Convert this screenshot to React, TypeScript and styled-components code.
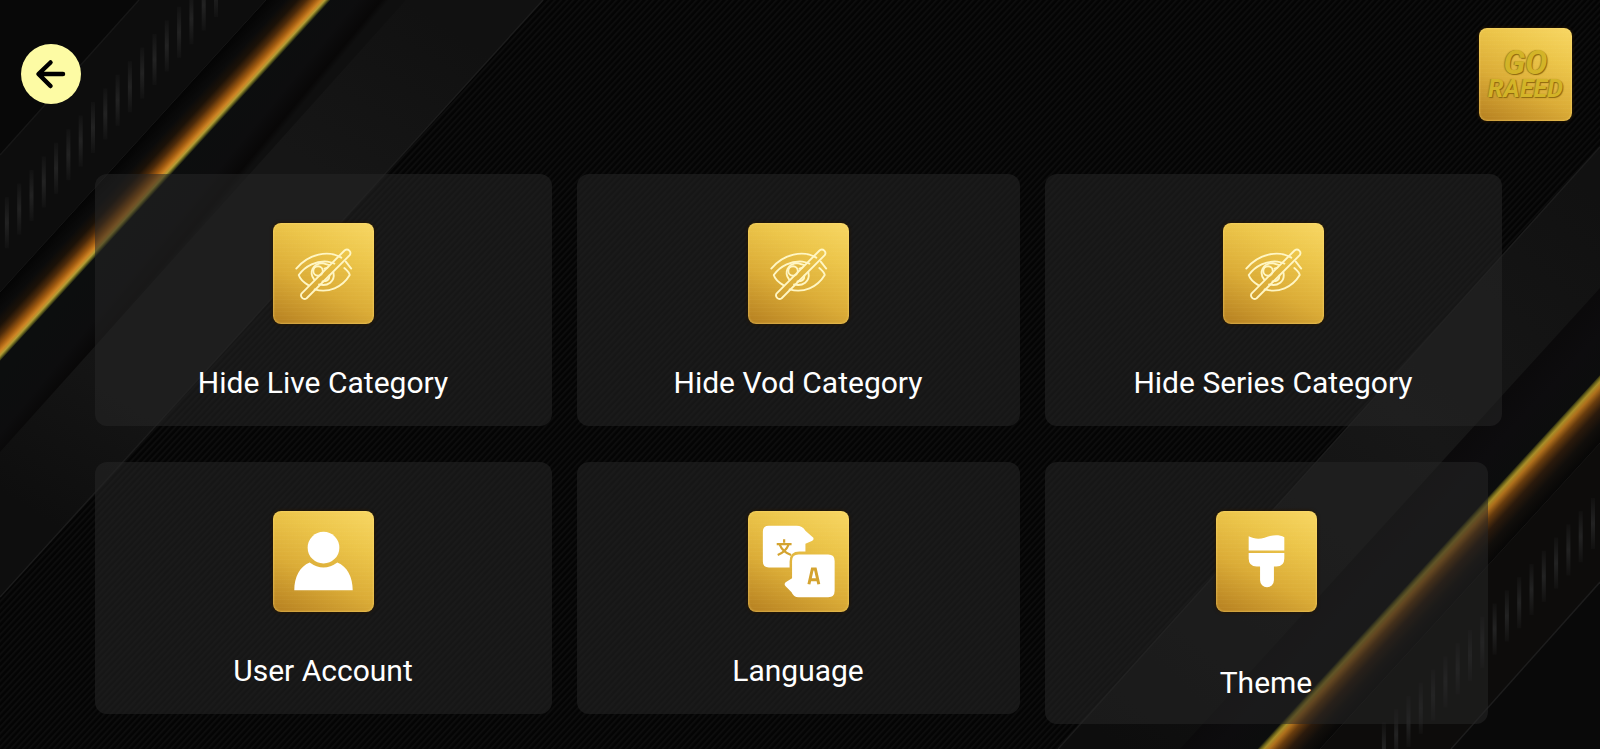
import React from "react";
import styled, { createGlobalStyle } from "styled-components";

const GlobalStyle = createGlobalStyle`
  * { box-sizing: border-box; }
  body { margin: 0; background: #050505; color: #fff; font-family: Roboto, "Liberation Sans", sans-serif; }
`;

const Page = styled.div`
  position: relative;
  isolation: isolate;
  min-height: 100vh;
  overflow: hidden;
`;

const Backdrop = styled.svg`
  position: absolute;
  inset: 0;
  z-index: -1;
  width: 100%;
  height: 100%;
`;

const TopBar = styled.header`
  display: flex;
  justify-content: space-between;
  align-items: flex-start;
  padding: 28px 28px 0 21px;
`;

const BackButton = styled.button`
  display: grid;
  place-items: center;
  width: 60px;
  height: 60px;
  margin-top: 16px;
  padding: 0;
  border: 0;
  border-radius: 50%;
  background: #fdfba4;
  color: #000;
  cursor: pointer;
`;

const GoldPlate = styled.span<{ $size: number }>`
  display: grid;
  place-items: center;
  flex: none;
  width: ${(p) => p.$size}px;
  height: ${(p) => p.$size}px;
  border-radius: 8px;
  background:
    repeating-linear-gradient(180deg, rgba(255, 240, 160, 0.03) 0 1px, transparent 1px 4px),
    linear-gradient(205deg, #f8d764 0%, #ecc54a 30%, #dbac37 62%, #b57f20 100%);
  box-shadow:
    inset 0 0 2px 1px rgba(255, 222, 120, 0.4),
    0 0 3px 1px rgba(40, 24, 0, 0.8);
`;

const Brand = styled(GoldPlate)`
  align-content: center;
  color: #d3b428;
  font-style: italic;
  font-weight: 700;
  text-align: center;
  text-shadow: 1px 1px 1px #8c680e, -1px 0 1px #a8841a;
`;

const BrandTop = styled.span`
  font-size: 33px;
  line-height: 28px;
`;

const BrandBottom = styled.span`
  font-size: 25px;
  line-height: 24px;
`;

const Tiles = styled.main`
  display: grid;
  grid-template-columns: 457fr 443fr 457fr;
  gap: 36px 25px;
  align-items: start;
  padding: 53px 98px 24px 95px;
`;

const Tile = styled.button<{ $inset?: boolean }>`
  display: flex;
  flex-direction: column;
  align-items: center;
  gap: ${(p) => (p.$inset ? 52 : 40)}px;
  min-width: 0;
  margin: 0 ${(p) => (p.$inset ? 14 : 0)}px 0 0;
  padding: 49px 17px ${(p) => (p.$inset ? 23 : 25)}px 16px;
  border: 0;
  border-radius: 12px;
  background: rgba(38, 38, 38, 0.55);
  color: #fff;
  font: 400 30px/37px Roboto, "Liberation Sans", sans-serif;
  cursor: pointer;
`;

const ArrowIcon = () => (
  <svg width="60" height="60" viewBox="0 0 60 60" fill="none" stroke="currentColor" strokeWidth="4.500" strokeLinecap="round" strokeLinejoin="round" aria-hidden="true">
    <path d="M42 30H18M29.500 18.500L17.500 30L29.500 42" />
  </svg>
);

const HiddenIcon = () => (
  <svg width="101" height="101" viewBox="0 0 102 102" fill="none" stroke="#fff6c4" strokeWidth="1.900" strokeLinecap="round" strokeLinejoin="round" aria-hidden="true">
    <path d="M23.500 46C36 31 56 27 69 35M73.500 39L79 46" />
    <path d="M36 63C31 60 27 56 26 52.500C33 43 44 38 55 39C58 39.500 60 40 62 41M72 45.500C75 48 77 50 77.500 52.500C70 65 56 71 42 67" />
    <path d="M41.500 57C36 50 40 41 50 40.500L57 42.500M61 50C63 59 55 64.500 46.500 62" />
    <path d="M52 46L55 45M57 53C57 57 54 59 50 59" />
    <circle cx="45.500" cy="48.500" r="4.800" />
    <path d="M29 71L72.500 27.500A3.600 3.600 0 0 1 77.500 32.500L34 76A3.600 3.600 0 0 1 29 71Z" />
  </svg>
);

const UserIcon = () => (
  <svg width="101" height="101" viewBox="0 0 102 102" fill="#fff" aria-hidden="true">
    <circle cx="51" cy="37" r="16" />
    <path d="M37 52Q51 62 65 52C75 56 80.500 67 80.500 80H21.500C21.500 67 27 56 37 52Z" />
  </svg>
);

const LanguageIcon = () => (
  <svg width="101" height="101" viewBox="0 0 102 102" aria-hidden="true">
    <path fill="#fff" d="M21 15H49Q55 15 58 20L66 27Q67 28.500 65 30L58 33V41H52Q42 41 42 51V57H21Q15 57 15 51V21Q15 15 21 15Z" />
    <path fill="none" stroke="#d4a32f" strokeWidth="2.200" d="M36.500 28.500V32M29 33.500H44M41 34C39 39 35 42.500 30 44.500M32 34C34 39 38 42.500 43.500 44.500" />
    <path fill="#fff" d="M51 44H81Q87.500 44 87.500 50.500V80.500Q87.500 87 81 87H51Q46 87 44 82L38 76Q36 74 38 72L44.500 68V50.500Q44.500 44 51 44Z" />
    <path fill="none" stroke="#d4a32f" strokeWidth="3" d="M61.500 74L65 58.500H68L71.500 74M62.500 69.500H70.500" />
  </svg>
);

const BrushIcon = () => (
  <svg width="101" height="101" viewBox="0 0 102 102" fill="#fff" aria-hidden="true">
    <path d="M33 25.500C38 28 43 29 49 27C55 24.500 63 23 69 26.500V40H33Z" />
    <path d="M33 42.500H69V48Q69 56 61 56H58.500V70A7 7 0 0 1 44.500 70V56H41Q33 56 33 48Z" />
  </svg>
);

const leftTicks = Array.from({ length: 18 }, (_, i) => ({ x: 216 - i * 12.3, y: -34 + i * 13.6 }));
const rightTicks = Array.from({ length: 18 }, (_, i) => ({ x: 1593 - i * 12.3, y: 498 + i * 13.2 }));

const Background = () => (
  <Backdrop viewBox="0 0 1600 749" preserveAspectRatio="none" aria-hidden="true">
    <defs>
      <pattern id="weave" width="4.500" height="4.500" patternUnits="userSpaceOnUse" patternTransform="rotate(43)">
        <rect width="4.500" height="4.500" fill="#040404" />
        <rect width="2" height="4.500" fill="#0d0d0d" />
      </pattern>
      <linearGradient id="goldLeft" gradientUnits="userSpaceOnUse" x1="145" y1="133" x2="180" y2="165">
        <stop offset="0" stopColor="#040404" />
        <stop offset="0.300" stopColor="#0b0b0b" />
        <stop offset="0.480" stopColor="#1c1208" />
        <stop offset="0.620" stopColor="#4e2b0a" />
        <stop offset="0.760" stopColor="#a05a10" />
        <stop offset="0.850" stopColor="#cf8424" />
        <stop offset="0.910" stopColor="#b49c34" />
        <stop offset="0.950" stopColor="#65641e" />
        <stop offset="1" stopColor="#0c0e0e" />
      </linearGradient>
      <linearGradient id="goldRight" gradientUnits="userSpaceOnUse" x1="1428" y1="562" x2="1463" y2="594">
        <stop offset="0" stopColor="#0c0e0e" />
        <stop offset="0.050" stopColor="#5f5a18" />
        <stop offset="0.110" stopColor="#a98e28" />
        <stop offset="0.190" stopColor="#b0701c" />
        <stop offset="0.320" stopColor="#683c0e" />
        <stop offset="0.500" stopColor="#2b1a0c" />
        <stop offset="0.720" stopColor="#110e0b" />
        <stop offset="1" stopColor="#060606" />
      </linearGradient>
      <linearGradient id="shadeLeft" gradientUnits="userSpaceOnUse" x1="177" y1="163" x2="223" y2="201">
        <stop offset="0" stopColor="#0c0e0e" />
        <stop offset="0.600" stopColor="#0d0d0e" />
        <stop offset="0.900" stopColor="#080707" />
        <stop offset="1" stopColor="#0f0f0f" />
      </linearGradient>
      <linearGradient id="shadeRight" gradientUnits="userSpaceOnUse" x1="1387" y1="520" x2="1430" y2="560">
        <stop offset="0" stopColor="#0b0a0b" />
        <stop offset="0.500" stopColor="#0d0c0e" />
        <stop offset="1" stopColor="#0c0d0d" />
      </linearGradient>
      <linearGradient id="panelLeft" gradientUnits="userSpaceOnUse" x1="406" y1="0" x2="60" y2="530">
        <stop offset="0" stopColor="#111111" />
        <stop offset="0.300" stopColor="#161616" />
        <stop offset="0.700" stopColor="#161616" />
        <stop offset="1" stopColor="#0e0e0e" />
      </linearGradient>
      <linearGradient id="panelRight" gradientUnits="userSpaceOnUse" x1="1600" y1="200" x2="1120" y2="749">
        <stop offset="0" stopColor="#111" />
        <stop offset="0.400" stopColor="#171717" />
        <stop offset="1" stopColor="#0d0d0d" />
      </linearGradient>
      <linearGradient id="tick" x1="0" y1="0" x2="0" y2="1">
        <stop offset="0" stopColor="#222" stopOpacity="0.200" />
        <stop offset="0.500" stopColor="#222" />
        <stop offset="1" stopColor="#222" stopOpacity="0.200" />
      </linearGradient>
    </defs>

    <rect width="1600" height="749" fill="url(#weave)" />

    <path d="M0 0H543L0 597Z" fill="url(#panelLeft)" />
    <path d="M543 0L0 597" stroke="#1c1c1c" strokeWidth="1.500" />
    <path d="M0 0H406L0 452Z" fill="url(#shadeLeft)" />
    <path d="M0 0H332L0 361Z" fill="url(#goldLeft)" />
    <path d="M0 0H266L0 292Z" fill="#0d0d0d" />
    <path d="M266 0L0 292" stroke="#161616" strokeWidth="1" />
    <path d="M0 0H139L0 155Z" fill="#080808" />
    <path d="M139 0L0 155" stroke="#171717" strokeWidth="1.500" />
    {leftTicks.map((t) => (
      <rect key={t.x} x={t.x - 2} y={t.y} width="4" height="51" fill="url(#tick)" />
    ))}

    <path d="M1600 749V147L1058 749Z" fill="url(#panelRight)" />
    <path d="M1600 147L1058 749" stroke="#1c1c1c" strokeWidth="1.500" />
    <path d="M1600 749V288L1180 749Z" fill="url(#shadeRight)" />
    <path d="M1600 749V375L1256 749Z" fill="url(#goldRight)" />
    <path d="M1600 749V443L1320 749Z" fill="#0d0c0b" />
    <path d="M1600 443L1320 749" stroke="#161514" strokeWidth="1" />
    {rightTicks.map((t) => (
      <rect key={t.x} x={t.x - 2} y={t.y} width="4" height="51" fill="url(#tick)" />
    ))}
    <path d="M1600 749V582L1451 749Z" fill="#090909" />
    <path d="M1600 582L1451 749" stroke="#1d1d1d" strokeWidth="1.500" />
  </Backdrop>
);

const items = [
  { label: "Hide Live Category", icon: <HiddenIcon /> },
  { label: "Hide Vod Category", icon: <HiddenIcon /> },
  { label: "Hide Series Category", icon: <HiddenIcon /> },
  { label: "User Account", icon: <UserIcon /> },
  { label: "Language", icon: <LanguageIcon /> },
  { label: "Theme", icon: <BrushIcon />, inset: true },
];

export default function App() {
  return (
    <Page>
      <GlobalStyle />
      <Background />
      <TopBar>
        <BackButton type="button" aria-label="Back">
          <ArrowIcon />
        </BackButton>
        <Brand $size={93}>
          <BrandTop>GO</BrandTop>
          <BrandBottom>RAEED</BrandBottom>
        </Brand>
      </TopBar>
      <Tiles>
        {items.map((item) => (
          <Tile key={item.label} type="button" $inset={item.inset}>
            <GoldPlate $size={101}>{item.icon}</GoldPlate>
            <span>{item.label}</span>
          </Tile>
        ))}
      </Tiles>
    </Page>
  );
}
